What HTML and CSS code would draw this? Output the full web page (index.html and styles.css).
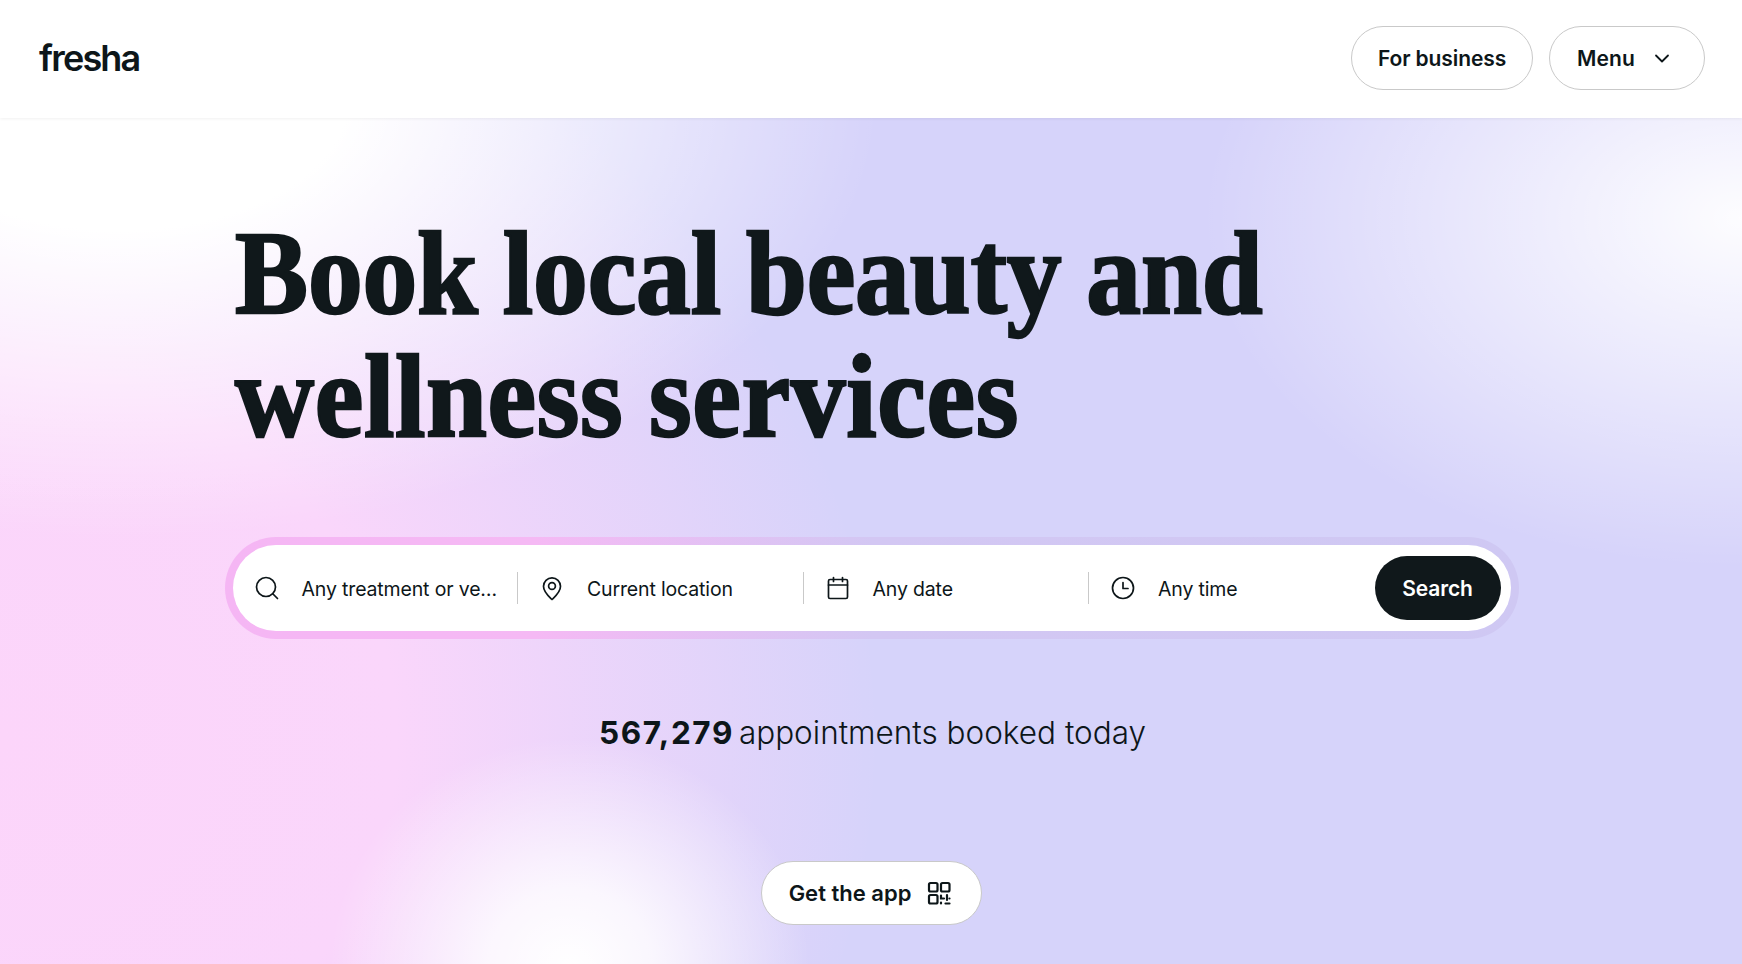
FILE: index.html
```html
<!DOCTYPE html>
<html lang="en">
<head>
    <meta charset="UTF-8">
    <meta name="viewport" content="width=device-width, initial-scale=1.0">
    <title>Fresha</title>
    <link rel="stylesheet" href="styles.css">
</head>
<body>
    <header class="top-bar">
        <a class="logo" href="#">fresha</a>
        <nav class="top-actions">
            <a class="pill" href="#">For business</a>
            <a class="pill pill-menu" href="#">Menu
                <svg width="24" height="24" viewBox="0 0 24 24" fill="none" stroke="#0d1619" stroke-width="1.8" stroke-linecap="round" stroke-linejoin="round"><path d="M6 9.5l6 6 6-6"/></svg>
            </a>
        </nav>
    </header>

    <main class="hero">
        <div class="hero-inner">
            <h1 class="headline">
                <span class="headline-line">Book local beauty and</span>
                <span class="headline-line headline-line-wide">wellness services</span>
            </h1>

            <form class="search-ring">
                <div class="search-box">
                    <div class="field">
                        <svg width="26" height="26" viewBox="0 0 26 26" fill="none" stroke="#0d1619" stroke-width="1.7" stroke-linecap="round"><circle cx="12" cy="12" r="9.5"/><path d="M19 19l4.5 4.5"/></svg>
                        <span class="field-text">Any treatment or ve…</span>
                    </div>
                    <div class="field">
                        <svg width="26" height="26" viewBox="0 0 26 26" fill="none" stroke="#0d1619" stroke-width="1.7" stroke-linejoin="round"><path d="M13 24.5c-1.5-1.6-8.5-7-8.5-13.2a8.5 8.5 0 0 1 17 0c0 6.2-7 11.6-8.5 13.2z"/><circle cx="13" cy="11" r="3.4"/></svg>
                        <span class="field-text">Current location</span>
                    </div>
                    <div class="field">
                        <svg width="26" height="26" viewBox="0 0 26 26" fill="none" stroke="#0d1619" stroke-width="1.7" stroke-linecap="round" stroke-linejoin="round"><rect x="3.5" y="4.5" width="19" height="19" rx="1.5"/><path d="M3.5 10h19M8.5 2.5v4M17.5 2.5v4"/></svg>
                        <span class="field-text">Any date</span>
                    </div>
                    <div class="field field-last">
                        <svg width="26" height="26" viewBox="0 0 26 26" fill="none" stroke="#0d1619" stroke-width="1.7" stroke-linecap="round" stroke-linejoin="round"><circle cx="13" cy="13" r="10.5"/><path d="M13 7.5V13.5H18"/></svg>
                        <span class="field-text">Any time</span>
                    </div>
                    <button class="search-btn" type="button">Search</button>
                </div>
            </form>

            <p class="counter"><strong>567,279</strong> appointments booked today</p>

            <a class="pill pill-app" href="#">Get the app
                <svg width="26" height="26" viewBox="0 0 26 26" fill="none" stroke="#0d1619" stroke-width="2.2" stroke-linecap="round"><rect x="3" y="3" width="8.5" height="8.5" rx="1.5"/><rect x="15" y="3" width="8.5" height="8.5" rx="1.5"/><rect x="3" y="15" width="8.5" height="8.5" rx="1.5"/><path d="M15 15.5v3h3M15 22.5v1M21 15v5M23.5 18.5h0M19.5 23.5h4"/></svg>
            </a>
        </div>
    </main>
</body>
</html>
```

FILE: styles.css
```css
* {
    box-sizing: border-box;
}

html, body {
    height: 100%;
}

body {
    margin: 0;
    font-family: Inter, "Noto Sans", sans-serif;
    color: #0d1619;
    overflow: hidden;
    display: flex;
    flex-direction: column;
}

a {
    color: inherit;
    text-decoration: none;
}

.top-bar {
    height: 118px;
    flex: none;
    background-color: #fff;
    display: flex;
    align-items: center;
    justify-content: space-between;
    padding: 0 37px 2px 39px;
    box-shadow: 0 1px 3px rgba(0, 0, 0, 0.06);
    position: relative;
    z-index: 1;
}

.logo {
    font-size: 36px;
    font-weight: 600;
    letter-spacing: -1.8px;
    line-height: 1;
}

.top-actions {
    display: flex;
    gap: 16px;
}

.pill {
    height: 64px;
    padding: 0 26px;
    display: inline-flex;
    align-items: center;
    background-color: #fff;
    border: 1px solid #c9c9c9;
    border-radius: 32px;
    font-size: 21px;
    font-weight: 600;
    letter-spacing: -0.1px;
}

.pill-menu {
    gap: 15px;
    padding: 0 30px 0 27px;
    letter-spacing: 0.1px;
}

.hero {
    flex: 1;
    background-color: #d6d3fa;
    background-image:
        radial-gradient(ellipse 240px 230px at 570px 850px, #fff 0%, rgba(255, 255, 255, 0.8) 35%, rgba(255, 255, 255, 0) 100%),
        radial-gradient(ellipse 540px 350px at 1742px 100px, rgba(255, 255, 255, 0.95) 0%, rgba(255, 255, 255, 0) 100%),
        radial-gradient(ellipse 760px 440px at 120px -20px, #fff 0%, #fff 30%, rgba(255, 255, 255, 0) 100%),
        radial-gradient(ellipse 880px 820px at 0 620px, #fcd5fa 0%, #fad6fb 45%, rgba(250, 214, 251, 0) 100%);
}

.hero-inner {
    width: 1295px;
    margin: 0 auto;
    padding-left: 1px;
    display: flex;
    flex-direction: column;
    align-items: center;
}

.headline {
    align-self: flex-start;
    margin: 94px 0 0 10px;
    font-family: "Liberation Serif", serif;
    font-size: 119px;
    font-weight: 700;
    line-height: 123px;
    letter-spacing: -0.15px;
    word-spacing: -2.5px;
    white-space: nowrap;
    color: #10181b;
    -webkit-text-stroke: 2.5px #10181b;
    transform: scaleX(0.92);
    transform-origin: left center;
}

.headline-line {
    display: block;
}

.headline-line-wide {
    letter-spacing: 0.7px;
}

.search-ring {
    width: 100%;
    margin-top: 79px;
    padding: 8px;
    border-radius: 51px;
    background: linear-gradient(90deg, #f5b6f4 0%, #f5b9f4 24%, #d3c7f3 50%, #cfc8f3 100%);
}

.search-box {
    height: 86px;
    background-color: #fff;
    border-radius: 43px;
    display: flex;
    align-items: center;
}

.field {
    width: 285.5px;
    height: 32px;
    padding-left: 21px;
    display: flex;
    align-items: center;
    gap: 22px;
    border-right: 1px solid #c9c9c9;
    flex: none;
}

.field-last {
    border-right: none;
}

.field svg {
    flex: none;
}

.field-text {
    font-size: 19.5px;
    font-weight: 400;
    letter-spacing: -0.15px;
    padding-top: 2px;
}

.search-btn {
    width: 127px;
    height: 64px;
    margin-left: auto;
    margin-right: 10px;
    border: none;
    border-radius: 32px;
    background-color: #10181b;
    color: #fff;
    font-family: inherit;
    font-size: 21px;
    font-weight: 600;
    letter-spacing: -0.1px;
}

.counter {
    margin: 74px 0 0;
    padding-left: 2px;
    font-size: 31.5px;
    line-height: 40px;
    font-weight: 300;
    letter-spacing: 0;
}

.counter strong {
    font-weight: 700;
    letter-spacing: 1.6px;
    margin-right: -4px;
}

.pill-app {
    margin-top: 108px;
    gap: 15px;
    padding: 0 29px 0 27px;
    font-size: 22px;
    letter-spacing: 0;
}
```
